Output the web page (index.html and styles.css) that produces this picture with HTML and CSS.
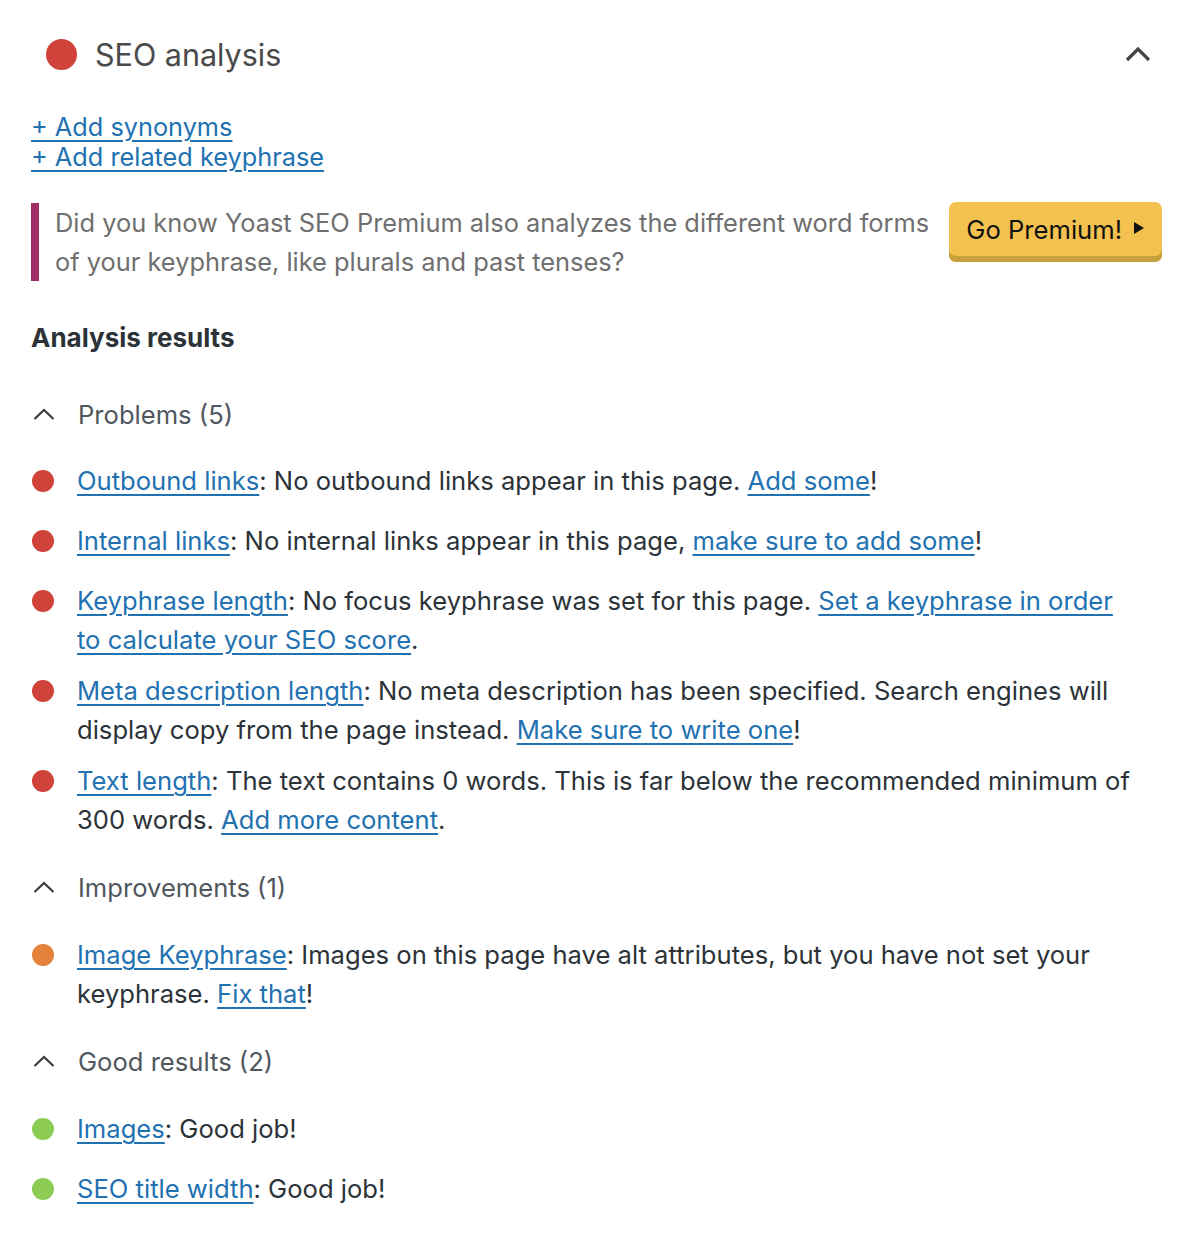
FILE: index.html
```html
<!DOCTYPE html>
<html lang="en">
<head>
<meta charset="utf-8">
<title>SEO analysis</title>
<link rel="stylesheet" href="styles.css">
</head>
<body>
<div class="panel">
  <div class="panel-header">
    <span class="score score-big bad"></span>
    <h2 class="panel-title">SEO analysis</h2>
    <svg class="chev-big" width="26" height="16" viewBox="0 0 26 16"><path d="M2 14 L13 3 L24 14" fill="none" stroke="#444" stroke-width="3.2" stroke-linejoin="miter"/></svg>
  </div>

  <div class="add-links">
    <a href="#">+ Add synonyms</a>
    <a href="#">+ Add related keyphrase</a>
  </div>

  <div class="notice">
    <p class="notice-text">Did you know Yoast SEO Premium also analyzes the different word forms of your keyphrase, like plurals and past tenses?</p>
    <a class="premium-btn" href="#">Go Premium! <span class="tri"></span></a>
  </div>

  <h3 class="results-title">Analysis results</h3>

  <div class="group group-first">
    <div class="group-head">
      <svg class="chev" width="22" height="12" viewBox="0 0 22 12"><path d="M1.5 11 L11 2 L20.5 11" fill="none" stroke="#3c3c3c" stroke-width="2.2"/></svg>
      <span>Problems (5)</span>
    </div>
    <ul class="results">
      <li><span class="score bad"></span><p><a href="#">Outbound links</a>: No outbound links appear in this page. <a href="#">Add some</a>!</p></li>
      <li><span class="score bad"></span><p><a href="#">Internal links</a>: No internal links appear in this page, <a href="#">make sure to add some</a>!</p></li>
      <li><span class="score bad"></span><p><a href="#">Keyphrase length</a>: No focus keyphrase was set for this page. <a href="#">Set a keyphrase in order to calculate your SEO score</a>.</p></li>
      <li><span class="score bad"></span><p><a href="#">Meta description length</a>: No meta description has been specified. Search engines will display copy from the page instead. <a href="#">Make sure to write one</a>!</p></li>
      <li><span class="score bad"></span><p><a href="#">Text length</a>: The text contains 0 words. This is far below the recommended minimum of 300 words. <a href="#">Add more content</a>.</p></li>
    </ul>
  </div>

  <div class="group">
    <div class="group-head">
      <svg class="chev" width="22" height="12" viewBox="0 0 22 12"><path d="M1.5 11 L11 2 L20.5 11" fill="none" stroke="#3c3c3c" stroke-width="2.2"/></svg>
      <span>Improvements (1)</span>
    </div>
    <ul class="results">
      <li><span class="score ok"></span><p><a href="#">Image Keyphrase</a>: Images on this page have alt attributes, but you have not set your keyphrase. <a href="#">Fix that</a>!</p></li>
    </ul>
  </div>

  <div class="group">
    <div class="group-head">
      <svg class="chev" width="22" height="12" viewBox="0 0 22 12"><path d="M1.5 11 L11 2 L20.5 11" fill="none" stroke="#3c3c3c" stroke-width="2.2"/></svg>
      <span>Good results (2)</span>
    </div>
    <ul class="results">
      <li><span class="score good"></span><p><a href="#">Images</a>: Good job!</p></li>
      <li><span class="score good"></span><p><a href="#">SEO title width</a>: Good job!</p></li>
    </ul>
  </div>
</div>
</body>
</html>
```

FILE: styles.css
```css
* { box-sizing: border-box; }
html, body { margin: 0; padding: 0; background: #fff; }
body {
  font-family: Inter, "Noto Sans", "Liberation Sans", sans-serif;
  color: #2c3338;
  font-size: 25.6px;
  line-height: 39px;
}
a { color: #2271b1; text-decoration: underline; text-underline-offset: 4px; text-decoration-thickness: 2px; }
p { margin: 0; }

.panel { padding: 0 32px 0 31px; }

.panel-header {
  display: flex;
  align-items: center;
  height: 112px;
  padding-left: 15px;
  padding-bottom: 4px;
}
.panel-title {
  margin: 0 0 0 18px;
  font-size: 30.5px;
  font-weight: 400;
  color: #4a4a4a;
  flex: 1;
}
.chev-big { margin-right: 11px; }

.score { display: inline-block; border-radius: 50%; flex: none; }
.score-big { width: 31px; height: 31px; }
.bad { background: #d0433a; }
.ok { background: #e3823a; }
.good { background: #8ccc55; }

.add-links { display: flex; flex-direction: column; align-items: flex-start; font-size: 25.3px; line-height: 30px; }
.add-links a { text-underline-offset: 4px; }

.notice {
  display: flex;
  align-items: flex-start;
  margin-top: 31px;
}
.notice-text {
  flex: 1;
  border-left: 8px solid #a12d69;
  padding: 0 16px;
  color: #6f6f6f;
  font-size: 25.4px;
  line-height: 39px;
}
.premium-btn {
  flex: none;
  display: flex;
  align-items: center;
  gap: 12px;
  height: 60px;
  margin-top: -1px;
  padding: 0 18px 6px 17px;
  background: #f3c14f;
  border-radius: 7px;
  box-shadow: inset 0 -6px 0 #c8a13f;
  color: #111;
  text-decoration: none;
  font-size: 25.6px;
}
.tri { width: 0; height: 0; border-left: 10px solid #111; border-top: 6px solid transparent; border-bottom: 6px solid transparent; margin-top: -2px; }

.results-title { margin: 39px 0 0 0; font-size: 26px; line-height: 36px; font-weight: 700; color: #2c3338; }

.group-head {
  display: flex;
  align-items: center;
  height: 48px;
  margin-top: 24px;
  margin-bottom: 24px;
  color: #50575e;
}
.group-first .group-head { margin-top: 34px; margin-bottom: 23px; }
.chev { margin: 0 23px 0 2px; }

.results { list-style: none; margin: 0; padding: 0; }
.results li {
  display: flex;
  align-items: flex-start;
  min-height: 48px;
  margin-bottom: 12px;
}
.results li .score { width: 22px; height: 22px; margin: 9px 23px 0 1px; }
.results li p { max-width: 1062px; }
```
